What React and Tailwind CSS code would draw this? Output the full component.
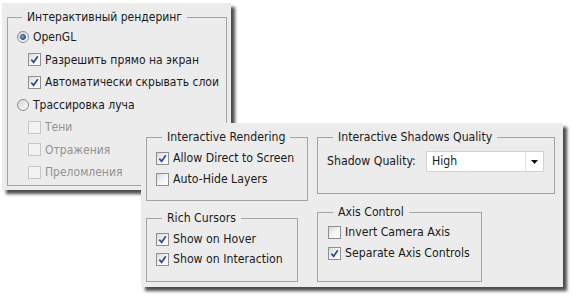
import React from "react";

const Check = ({ checked, disabled }) => (
  <span
    className={`flex h-[13px] w-[13px] shrink-0 items-center justify-center border ${
      disabled
        ? "border-[#c6c6c6] bg-[#f2f2f2]"
        : "border-[#8e8f8f] bg-gradient-to-br from-[#d8d8d8] via-[#f4f4f4] to-white"
    }`}
  >
    {checked && (
      <svg width="9" height="9" viewBox="0 0 9 9">
        <path d="M1.3 4.6 L3.6 7.3 L7.8 1.2" fill="none" stroke="#2b4a9c" strokeWidth="1.7" />
      </svg>
    )}
  </span>
);

const Radio = ({ checked }) => (
  <span className="flex h-[12px] w-[12px] shrink-0 items-center justify-center rounded-full border border-[#8c8c8c] bg-gradient-to-br from-[#d4d4d4] to-white">
    {checked && (
      <span className="h-[6px] w-[6px] rounded-full border border-[#1d3f7a] bg-gradient-to-br from-[#9cc8f2] to-[#1f5aa8]" />
    )}
  </span>
);

const Row = ({ h, children, disabled, className = "" }) => (
  <div
    className={`flex items-center gap-[4px] whitespace-nowrap ${h} ${disabled ? "text-[#929292]" : "text-[#1a1a1a]"} ${className}`}
  >
    {children}
  </div>
);

// legend offset is measured from the fieldset's padding edge, so ml = 15 - padding-left
const Group = ({ title, className, legendClass = "ml-[6px]", children }) => (
  <fieldset className={`border border-[#a3a3a3] ${className}`}>
    <legend className={`whitespace-nowrap px-[5px] leading-[16px] text-[#1a1a1a] ${legendClass}`}>{title}</legend>
    {children}
  </fieldset>
);

const RussianPanel = () => (
  <div className="absolute left-[2px] top-[3px] flex h-[187px] w-[229px] bg-[#ececec] pl-[5px] pr-[4px] pt-[6px] pb-[4px] text-[12px] shadow-[4px_4px_3px_rgba(0,0,0,0.7)]">
    <Group title="Интерактивный рендеринг" className="flex-1 pl-[9px] pt-[1px]" legendClass="ml-[5px]">
      <Row h="h-[22.5px]">
        <Radio checked />
        <span>OpenGL</span>
      </Row>
      <Row h="h-[22.5px]" className="pl-[11px]">
        <Check checked />
        <span>Разрешить прямо на экран</span>
      </Row>
      <Row h="h-[22.5px]" className="pl-[11px]">
        <Check checked />
        <span>Автоматически скрывать слои</span>
      </Row>
      <Row h="h-[22.5px]">
        <Radio />
        <span>Трассировка луча</span>
      </Row>
      <Row h="h-[22.5px]" className="pl-[11px]" disabled>
        <Check disabled />
        <span>Тени</span>
      </Row>
      <Row h="h-[22.5px]" className="pl-[11px]" disabled>
        <Check disabled />
        <span>Отражения</span>
      </Row>
      <Row h="h-[22.5px]" className="pl-[11px]" disabled>
        <Check disabled />
        <span>Преломления</span>
      </Row>
    </Group>
  </div>
);

const EnglishPanel = () => (
  <div className="absolute left-[141px] top-[123px] flex h-[164px] w-[422px] gap-[9px] bg-[#ececec] pl-[5px] pt-[6px] text-[12.2px] shadow-[4px_4px_3px_rgba(0,0,0,0.7)]">
    <div className="flex w-[162px] flex-col items-start gap-[9px]">
      <Group title="Interactive Rendering" className="h-[72px] w-[162px] pl-[9px] pt-[3px]">
        <Row h="h-[21px]">
          <Check checked />
          <span>Allow Direct to Screen</span>
        </Row>
        <Row h="h-[21px]">
          <Check />
          <span>Auto-Hide Layers</span>
        </Row>
      </Group>
      <Group title="Rich Cursors" className="h-[72px] w-[152px] pl-[9px] pt-[3px]">
        <Row h="h-[20px]">
          <Check checked />
          <span>Show on Hover</span>
        </Row>
        <Row h="h-[20px]">
          <Check checked />
          <span>Show on Interaction</span>
        </Row>
      </Group>
    </div>
    <div className="flex w-[238px] flex-col items-start gap-[10px]">
      <Group title="Interactive Shadows Quality" className="h-[65px] w-[238px] pl-[9px] pr-[10px] pt-[6px]">
        <div className="flex h-[21px] items-center justify-between whitespace-nowrap text-[#1a1a1a]">
          <span>Shadow Quality:</span>
          <div className="flex h-[21px] w-[118px] items-center border border-[#d2d2d2] bg-white">
            <span className="flex-1 pl-[5px]">High</span>
            <div className="flex h-full w-[18px] items-center justify-center border-l border-[#e2e2e2]">
              <svg width="7" height="4" viewBox="0 0 7 4">
                <path d="M0 0 H7 L3.5 4 Z" fill="#111" />
              </svg>
            </div>
          </div>
        </div>
      </Group>
      <Group title="Axis Control" className="h-[78px] w-[165px] pl-[10px] pt-[2px]" legendClass="ml-[5px]">
        <Row h="h-[21px]">
          <Check />
          <span>Invert Camera Axis</span>
        </Row>
        <Row h="h-[21px]">
          <Check checked />
          <span>Separate Axis Controls</span>
        </Row>
      </Group>
    </div>
  </div>
);

export default function App() {
  return (
    <div className="relative h-[301px] w-[573px] overflow-hidden bg-white font-['DejaVu_Sans_Condensed','DejaVu_Sans',sans-serif]">
      <RussianPanel />
      <EnglishPanel />
    </div>
  );
}
